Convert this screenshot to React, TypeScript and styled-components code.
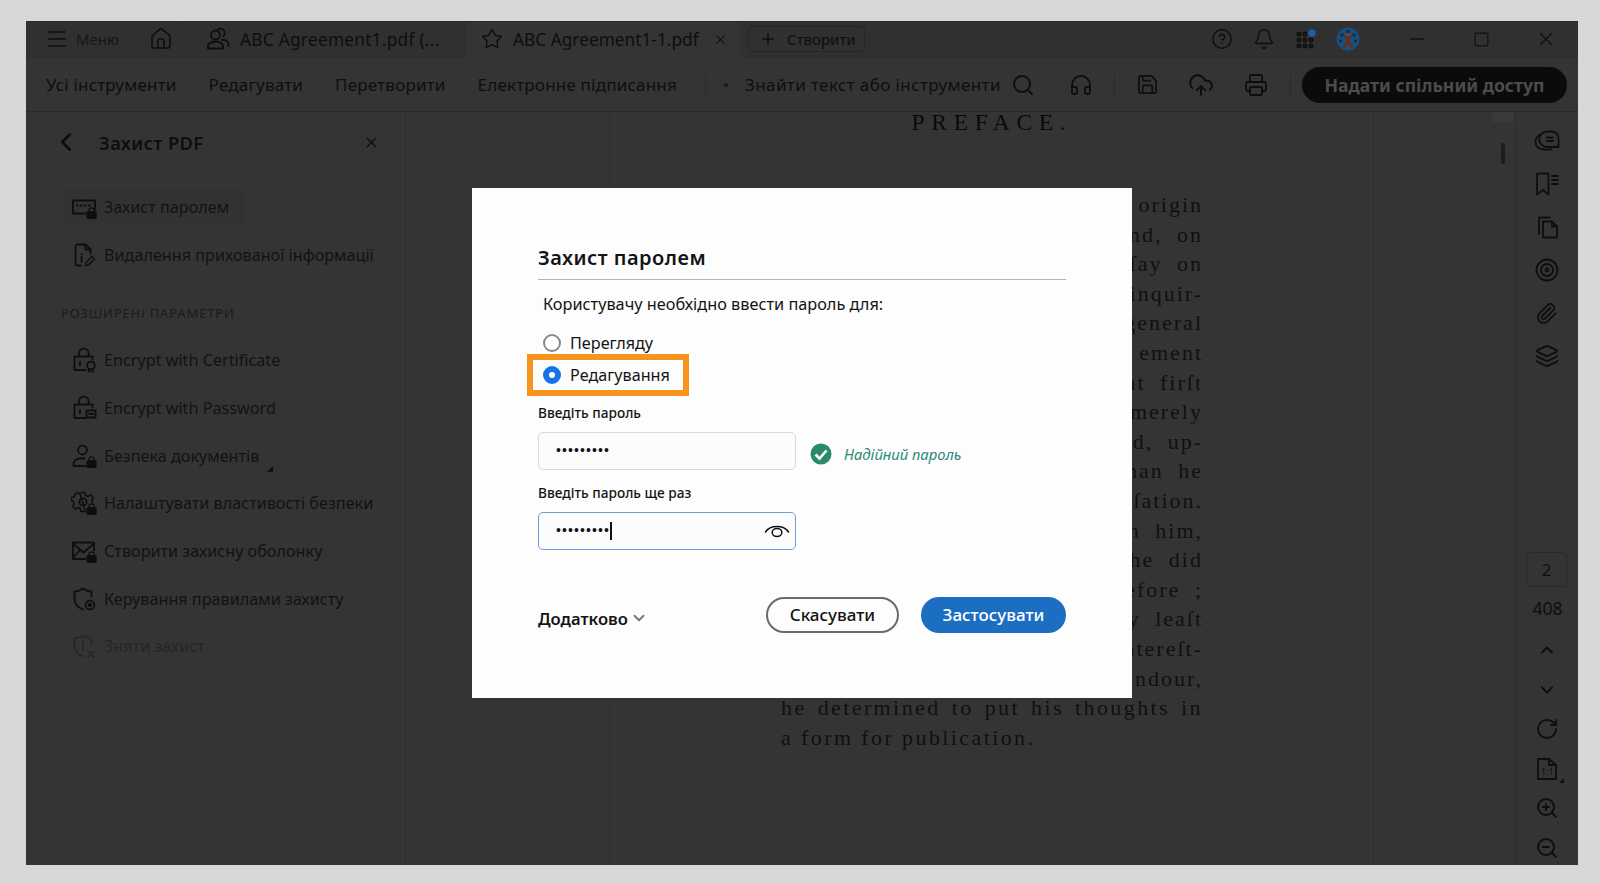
import React from 'react'
import styled, { createGlobalStyle } from 'styled-components'
import {
  Bell,
  ChevronDown,
  ChevronLeft,
  ChevronUp,
  CircleHelp,
  CloudUpload,
  Headphones,
  Home,
  Layers,
  Menu,
  Minus,
  Paperclip,
  Plus,
  Printer,
  RotateCw,
  Save,
  Search,
  Square,
  Star,
  X,
  ZoomIn,
  ZoomOut
} from 'lucide-react'

const INK = '#0e0e0e'

const GlobalStyle = createGlobalStyle`
  html, body {
    margin: 0;
    padding: 0;
    background: #d8d8d8;
  }
  body {
    font-family: "Noto Sans", "Open Sans", sans-serif;
    color: ${INK};
  }
`

const Screen = styled.div`
  width: 1600px;
  height: 884px;
  box-sizing: border-box;
  padding: 21px 22px 19px 26px;
  overflow: hidden;
`

const AppWindow = styled.div`
  position: relative;
  width: 1552px;
  height: 844px;
  display: flex;
  flex-direction: column;
  background: #343434;
  border-top: 1px solid #2a2a2a;
  box-sizing: border-box;
  overflow: hidden;
`

const TitleBar = styled.div`
  flex: 0 0 36px;
  display: flex;
  align-items: stretch;
  background: #303030;
`

const MenuCell = styled.div`
  width: 156px;
  box-sizing: border-box;
  padding: 0 0 2px 19px;
  display: flex;
  align-items: center;
  border-right: 1px solid #2b2b2b;
  font-size: 15px;
  color: #161616;
`

const MenuLabel = styled.span`
  margin: 0 30px 0 7px;
`

const Tab = styled.div<{ $active?: boolean }>`
  width: ${(p) => (p.$active ? 273 : 285)}px;
  box-sizing: border-box;
  padding: 0 0 2px ${(p) => (p.$active ? 14 : 23)}px;
  display: flex;
  align-items: center;
  gap: ${(p) => (p.$active ? 10 : 9)}px;
  background: ${(p) => (p.$active ? '#343434' : 'transparent')};
  font-size: 17.3px;
  letter-spacing: ${(p) => (p.$active ? 0 : 0.25)}px;
  white-space: nowrap;
`

const TabClose = styled.span`
  display: flex;
  margin-left: 4px;
  color: #181818;
`

const NewButton = styled.div`
  align-self: center;
  width: 117px;
  height: 26px;
  margin: 0 0 2px 8px;
  box-sizing: border-box;
  display: flex;
  align-items: center;
  gap: 10px;
  padding-left: 10px;
  border: 1px solid #262626;
  border-radius: 4px;
  font-size: 15px;
`

const TitleIcons = styled.div`
  margin-left: auto;
  padding-bottom: 2px;
  display: flex;
  align-items: center;
`

const IconCell = styled.span`
  width: 42px;
  display: flex;
  align-items: center;
  justify-content: center;
`

const WindowControls = styled.div`
  margin-left: 16px;
  padding-bottom: 2px;
  display: flex;
  align-items: center;
`

const WindowButton = styled.span`
  width: 64.5px;
  display: flex;
  align-items: center;
  justify-content: center;
  color: #101010;
`

const Toolbar = styled.div`
  flex: 0 0 54px;
  box-sizing: border-box;
  display: flex;
  align-items: center;
  padding: 0 11px 0 20px;
  border-bottom: 1px solid #2b2b2b;
`

const ToolNav = styled.nav`
  display: flex;
  gap: 32px;
  font-size: 17px;
  letter-spacing: 0.2px;
  white-space: nowrap;
`

const ToolDivider = styled.span<{ $left: number }>`
  width: 1px;
  height: 22px;
  background: #2c2c2c;
  margin-left: ${(p) => p.$left}px;
`

const FindBox = styled.div`
  display: flex;
  align-items: center;
  font-size: 17px;
  letter-spacing: 0.4px;
  white-space: nowrap;
`

const FindDot = styled.span`
  width: 4px;
  height: 4px;
  border-radius: 50%;
  background: #1a1a1a;
  margin: 0 17px 0 18px;
`

const ToolIcon = styled.span<{ $left: number }>`
  display: flex;
  margin-left: ${(p) => p.$left}px;
`

const ShareButton = styled.div`
  margin-left: auto;
  width: 265px;
  height: 36px;
  display: flex;
  align-items: center;
  justify-content: center;
  border-radius: 18px;
  background: #0b0b0b;
  color: #4c4c4c;
  font-size: 17.6px;
  font-weight: 700;
`

const Workspace = styled.div`
  flex: 1;
  min-height: 0;
  display: grid;
  grid-template-columns: 380px 204px 764px 142px 62px;
`

const Sidebar = styled.aside`
  box-sizing: border-box;
  padding: 10px 25px 0 36px;
  border-right: 1px solid #2e2e2e;
`

const SideHeader = styled.div`
  height: 40px;
  display: flex;
  align-items: center;
  margin-bottom: 27px;
  font-size: 18.3px;
  font-weight: 600;
  letter-spacing: 0.4px;
`

const SideTitle = styled.span`
  margin-left: 18px;
  flex: 1;
`

const ToolRow = styled.div<{ $selected?: boolean; $disabled?: boolean }>`
  width: ${(p) => (p.$selected ? '183px' : 'auto')};
  height: 36px;
  margin-bottom: 11.7px;
  box-sizing: border-box;
  padding-left: 9px;
  display: flex;
  align-items: center;
  gap: 7px;
  border-radius: 4px;
  background: ${(p) => (p.$selected ? '#323232' : 'transparent')};
  color: ${(p) => (p.$disabled ? '#262626' : '#121212')};
  font-size: 16.2px;
  white-space: nowrap;
`

const SectionLabel = styled.div`
  margin: 31px 0 20.5px -1px;
  font-size: 13px;
  letter-spacing: 0.85px;
  color: #1b1b1b;
`

const Caret = styled.span`
  width: 0;
  height: 0;
  align-self: flex-end;
  margin: 0 0 2px 1px;
  border-left: 6px solid transparent;
  border-bottom: 6px solid #101010;
`

const Gutter = styled.div`
  border-right: 1px solid #2e2e2e;
`

const Page = styled.main`
  box-sizing: border-box;
  padding: 0 170px 0 171px;
  border-right: 1px solid #2e2e2e;
  font-family: "Liberation Serif", "Times New Roman", serif;
  color: #101010;
`

const PageHeading = styled.h1`
  margin: 0 0 58px;
  font-size: 23.5px;
  line-height: 20px;
  font-weight: 400;
  letter-spacing: 6.7px;
  text-align: center;
  color: #0a0a0a;
`

const DocLine = styled.div<{ $align: 'right' | 'justify' | 'left' }>`
  height: 29.6px;
  line-height: 29.6px;
  font-size: 22px;
  letter-spacing: ${(p) => (p.$align === 'right' ? 2 : 2.4)}px;
  word-spacing: ${(p) => (p.$align === 'right' ? 7 : 0)}px;
  white-space: ${(p) => (p.$align === 'justify' ? 'normal' : 'nowrap')};
  text-align: ${(p) => p.$align};
  text-align-last: ${(p) => p.$align};
`

const ScrollGutter = styled.div`
  display: flex;
  justify-content: flex-end;
  padding-right: 1px;
  border-right: 1px solid #2c2c2c;
`

const ScrollTrack = styled.div`
  width: 22px;
  display: flex;
  flex-direction: column;
  align-items: center;
`

const ScrollCap = styled.div`
  width: 22px;
  height: 10px;
  background: #3a3a3a;
  margin-bottom: 21px;
`

const ScrollThumb = styled.div`
  width: 4px;
  height: 21px;
  border-radius: 2px;
  background: #1c1c1c;
`

const Rail = styled.aside`
  display: flex;
  flex-direction: column;
  align-items: center;
  justify-content: space-between;
  padding: 17px 1px 5px 0;
`

const RailGroup = styled.div<{ $gap: number }>`
  display: flex;
  flex-direction: column;
  align-items: center;
  gap: ${(p) => p.$gap}px;
`

const RailIcon = styled.span`
  position: relative;
  width: 24px;
  height: 24px;
  display: flex;
  align-items: center;
  justify-content: center;
`

const PageBox = styled.div`
  width: 41px;
  height: 35px;
  box-sizing: border-box;
  display: flex;
  align-items: center;
  justify-content: center;
  border: 1px solid #2a2a2a;
  border-radius: 4px;
  font-size: 17px;
`

const PageCount = styled.div`
  margin: 10px 0 19px 2px;
  font-size: 17.5px;
  line-height: 22px;
`

const RailCaret = styled(Caret)`
  position: absolute;
  right: -5px;
  bottom: -2px;
  margin: 0;
  border-left-width: 5px;
  border-bottom-width: 5px;
`

const Backdrop = styled.div`
  position: absolute;
  inset: 0;
  display: flex;
  align-items: center;
  justify-content: center;
`

const Dialog = styled.section`
  width: 660px;
  height: 510px;
  margin-bottom: 1px;
  box-sizing: border-box;
  padding: 53px 66px 0;
  background: #fdfdfd;
  color: #141414;
`

const DialogTitle = styled.h2`
  margin: 0;
  height: 38px;
  font-size: 20px;
  line-height: 34px;
  font-weight: 600;
  letter-spacing: 0.5px;
  border-bottom: 1px solid #b5b5b5;
`

const Prompt = styled.p`
  margin: 13px 0 0 5px;
  font-size: 16.3px;
  line-height: 22px;
`

const RadioRow = styled.div`
  position: relative;
  height: 32px;
  display: flex;
  align-items: center;
  gap: 9px;
  padding-left: 5px;
  font-size: 16.2px;
`

const Radio = styled.span<{ $checked?: boolean }>`
  width: 18px;
  height: 18px;
  box-sizing: border-box;
  border-radius: 50%;
  background: #fff;
  border: ${(p) => (p.$checked ? '6px solid #1473e6' : '2.4px solid #8a8a8a')};
`

const Callout = styled.span`
  position: absolute;
  left: -11px;
  top: -5px;
  width: 162px;
  height: 42px;
  box-sizing: border-box;
  border: 6px solid #f7941d;
`

const RadioGroup = styled.div`
  margin-top: 12px;
`

const FieldLabel = styled.div<{ $top: number }>`
  margin-top: ${(p) => p.$top}px;
  font-size: 13.7px;
  line-height: 18px;
  font-weight: 500;
`

const FieldRow = styled.div`
  margin-top: 10px;
  display: flex;
  align-items: center;
`

const PasswordBox = styled.div<{ $focused?: boolean }>`
  width: 258px;
  height: 38px;
  box-sizing: border-box;
  padding: 0 5px 0 17px;
  display: flex;
  align-items: center;
  border-radius: 5px;
  background: #fcfcfc;
  border: ${(p) => (p.$focused ? '1.5px solid #6b9fd6' : '1.5px solid #d9d9d9')};
`

const Dots = styled.span`
  font-family: "Liberation Sans", sans-serif;
  font-size: 14px;
  line-height: 1;
  letter-spacing: 1.1px;
  margin-top: -2px;
`

const TextCursor = styled.span`
  width: 2px;
  height: 18px;
  background: #111;
`

const EyeIcon = styled.span`
  display: flex;
  margin-left: auto;
`

const Strength = styled.div`
  margin: 5px 0 0 14px;
  display: flex;
  align-items: center;
  gap: 12px;
  font-size: 14.8px;
  font-style: italic;
  color: #2a8a78;
`

const DialogFooter = styled.div`
  margin-top: 47px;
  display: flex;
  align-items: center;
`

const MoreToggle = styled.div`
  display: flex;
  align-items: center;
  gap: 2px;
  margin-top: 6px;
  font-size: 16.6px;
  font-weight: 600;
`

const FooterButtons = styled.div`
  margin-left: auto;
  display: flex;
  gap: 22px;
`

const PillButton = styled.button<{ $primary?: boolean }>`
  width: ${(p) => (p.$primary ? 145 : 133)}px;
  height: 36px;
  padding: 0 0 2px;
  border-radius: 18px;
  font-family: inherit;
  font-size: 17px;
  font-weight: 500;
  color: ${(p) => (p.$primary ? '#fff' : '#141414')};
  background: ${(p) => (p.$primary ? '#1b6ec2' : '#fdfdfd')};
  border: ${(p) => (p.$primary ? 'none' : '2px solid #6a6a6a')};
`

const Glyph: React.FC<{ size?: number; children: React.ReactNode }> = ({ size = 26, children }) => (
  <svg
    width={size}
    height={size}
    viewBox="0 0 26 26"
    fill="none"
    stroke={INK}
    strokeWidth={1.8}
    strokeLinecap="round"
    strokeLinejoin="round"
    style={{ flex: 'none' }}
  >
    {children}
  </svg>
)

const LockBadge = () => (
  <>
    <path d="M18 18v-1.6a2.6 2.6 0 0 1 5.2 0V18" strokeWidth={1.3} />
    <rect x="16.4" y="18" width="8.4" height="6.2" rx="1" fill={INK} />
  </>
)

const PasswordGlyph = () => (
  <Glyph>
    <path d="M15 19.5H2V6.5h22v9" />
    <path d="M6 11.5h.6M10 11.5h.6M14 11.5h.6M18 11.5h.6" strokeWidth={2} />
    <LockBadge />
  </Glyph>
)

const RedactGlyph = () => (
  <Glyph>
    <path d="M10 23.5H6.5a2 2 0 0 1-2-2v-17a2 2 0 0 1 2-2h8l5 5v4" />
    <path d="M14.5 2.5v5h5" />
    <path d="M10.5 12v.4M10.5 15v5" strokeWidth={1.8} />
    <path d="M15 20.5l6-6 2.5 2.5-6 6-3 .5z" strokeWidth={1.4} />
  </Glyph>
)

const PadlockBase = () => (
  <>
    <path d="M8 9V6.5a4.8 4.8 0 0 1 9.6 0V9" />
    <path d="M15 23H3.5V9.5h18v3" />
    <path d="M9 15v3" strokeWidth={2} />
  </>
)

const CertificateGlyph = () => (
  <Glyph>
    <PadlockBase />
    <circle cx="20" cy="18.5" r="3.8" />
    <path d="M17.6 22v3l2.4-1.3 2.4 1.3v-3" strokeWidth={1.2} />
  </Glyph>
)

const EncryptGlyph = () => (
  <Glyph>
    <PadlockBase />
    <rect x="15.5" y="15.5" width="9" height="7" />
    <path d="M18 19h4" />
  </Glyph>
)

const UserLockGlyph = () => (
  <Glyph>
    <circle cx="11.5" cy="7" r="4.5" />
    <path d="M2.5 23v-1.5c0-3.8 3.5-6 7-6h4M2.500 23H15" />
    <LockBadge />
  </Glyph>
)

const GearLockGlyph = () => (
  <Glyph>
    <path d="M10 2.500h4l.7 3 2.400 1 2.600-1.600 2.600 2.800-1.600 2.600.8 2M14.500 21.500H10l-.7-3-2.400-1-2.600 1.600-2.600-2.800 1.600-2.600-1-2.400-2-.7v-3l3-.7 1-2.400L3.600 5l2.800-2.600 2.600 1.600z" strokeWidth={1.5} />
    <circle cx="12" cy="12" r="3.600" />
    <LockBadge />
  </Glyph>
)

const MailLockGlyph = () => (
  <Glyph>
    <path d="M14.500 21H2V4.500h21v8" />
    <path d="M2 5.500l10.500 9 10.500-9M2 20l7-8" />
    <LockBadge />
  </Glyph>
)

const ShieldGearGlyph = () => (
  <Glyph>
    <path d="M12 2.500c2.500 2 5.500 3 8.500 3v5M12 2.500c-2.500 2-5.500 3-8.500 3v7c0 5 3.500 9 8.500 11" />
    <circle cx="19" cy="19" r="4.400" />
    <circle cx="19" cy="19" r="1.200" fill={INK} />
  </Glyph>
)

const ShieldOffGlyph = () => (
  <svg width="26" height="26" viewBox="0 0 26 26" fill="none" stroke="#262626" strokeWidth={1.6} strokeLinecap="round">
    <path d="M12 2.500c2.500 2 5.500 3 8.500 3v7M12 2.500c-2.500 2-5.500 3-8.500 3v7c0 5 3.500 9 8.500 11" />
    <path d="M12 7v10" strokeWidth={1.4} />
    <path d="M17 18l6 6M23 18l-6 6" />
  </svg>
)

const PeopleGlyph = () => (
  <Glyph>
    <circle cx="10.500" cy="9" r="4.500" />
    <path d="M13 3.200a4.600 4.600 0 0 1 5 .4 4.500 4.500 0 0 1 .5 6.600" />
    <path d="M3 22.500c-1-4.500 3-7 7.500-7s8.500 2.500 7.500 7z" />
    <path d="M17 14c3.500-.5 7 1.500 6.500 6" />
  </Glyph>
)

const AppsGlyph = () => (
  <svg width="22" height="22" viewBox="0 0 22 22" fill="none" stroke={INK} strokeWidth={1.7}>
    <circle cx="4" cy="6" r="1.600" />
    <circle cx="10" cy="6" r="1.600" />
    <circle cx="4" cy="12" r="1.600" />
    <circle cx="10" cy="12" r="1.600" />
    <circle cx="16" cy="12" r="1.600" />
    <circle cx="4" cy="18" r="1.600" />
    <circle cx="10" cy="18" r="1.600" />
    <circle cx="16" cy="18" r="1.600" />
    <circle cx="17" cy="5" r="3.800" fill="#1c5fa3" stroke="none" />
  </svg>
)

const AvatarGlyph = () => (
  <svg width="24" height="24" viewBox="0 0 24 24">
    <circle cx="12" cy="12" r="11.500" fill="#184f7c" />
    <circle cx="6" cy="8" r="1.800" fill="#0d2f4d" />
    <circle cx="12" cy="4.500" r="1.800" fill="#0d2f4d" />
    <circle cx="18" cy="8" r="1.800" fill="#0d2f4d" />
    <circle cx="4.500" cy="14" r="1.500" fill="#0d2f4d" />
    <circle cx="19.500" cy="14" r="1.500" fill="#0d2f4d" />
    <path d="M8 21L15 8M16 21L9 8" stroke="#6e2a18" strokeWidth={2.600} />
    <path d="M9.500 8.500a3 3 0 0 1 5 0" stroke="#7a4a10" strokeWidth={2} fill="none" />
  </svg>
)

const CommentsGlyph = () => (
  <Glyph>
    <path d="M13 3.500h5a6.500 6.500 0 0 1 6.500 6.500v9H13a7.700 7.700 0 0 1 0-15.500z" />
    <path d="M6 6.500C3.500 8 1.500 10.500 1.500 14c0 4.500 3.500 7.500 8 7.500h8" />
    <path d="M13 9.500h6M13 13h6" />
  </Glyph>
)

const BookmarksGlyph = () => (
  <Glyph>
    <path d="M3 2.500h11.500v21l-5.700-4.500-5.800 4.500z" />
    <path d="M18 5h6M18 9h6M18 13h6" />
  </Glyph>
)

const PagesGlyph = () => (
  <Glyph>
    <path d="M5 20V3.500h11" />
    <path d="M9 7.500h9l5 5V23.500H9z" />
    <path d="M18 7.500v5h5" />
  </Glyph>
)

const TargetGlyph = () => (
  <Glyph>
    <circle cx="13" cy="13" r="10.500" />
    <circle cx="13" cy="13" r="6" />
    <circle cx="13" cy="13" r="1.500" />
  </Glyph>
)

const FitGlyph = () => (
  <svg width="22" height="24" viewBox="0 0 22 24" fill="none" stroke={INK} strokeWidth={1.8}>
    <path d="M2 2h11l7 6v14H2z" />
    <path d="M13 2v6h7" />
    <text x="5" y="18" fontSize="9" fontFamily="Noto Sans" fill={INK} stroke="none">1:1</text>
  </svg>
)

const CheckBadge = () => (
  <svg width="22" height="22" viewBox="0 0 22 22">
    <circle cx="11" cy="11" r="10.500" fill="#2b8a6b" />
    <path d="M5.500 11.500l4 4 7-8" fill="none" stroke="#fff" strokeWidth={2.600} />
  </svg>
)

const RevealGlyph = () => (
  <svg width="26" height="18" viewBox="0 0 26 18" fill="none" stroke="#111" strokeWidth={1.5} strokeLinecap="round">
    <path d="M1.500 10C6 2.500 20 2.500 24.500 10" />
    <ellipse cx="13" cy="10.500" rx="4.800" ry="4" />
  </svg>
)

const sideTools = [
  { icon: <CertificateGlyph />, label: 'Encrypt with Certificate' },
  { icon: <EncryptGlyph />, label: 'Encrypt with Password' },
  { icon: <UserLockGlyph />, label: 'Безпека документів', caret: true },
  { icon: <GearLockGlyph />, label: 'Налаштувати властивості безпеки' },
  { icon: <MailLockGlyph />, label: 'Створити захисну оболонку' },
  { icon: <ShieldGearGlyph />, label: 'Керування правилами захисту' },
  { icon: <ShieldOffGlyph />, label: 'Зняти захист', disabled: true }
]

const docTails = [
  'the origin',
  'and, on',
  'eſſay on',
  'inquir-',
  'general',
  'ement',
  'at firſt',
  'merely',
  'ed, up-',
  'than he',
  'converſation.',
  'on him,',
  'he did',
  'before ;',
  'by leaſt',
  'intereſt-',
  'candour,'
]

const App: React.FC = () => {
  return (
    <Screen>
      <GlobalStyle />
      <AppWindow>
        <TitleBar>
          <MenuCell>
            <Menu size={24} color={INK} strokeWidth={1.7} />
            <MenuLabel>Меню</MenuLabel>
            <Home size={24} color={INK} strokeWidth={1.6} />
          </MenuCell>
          <Tab>
            <PeopleGlyph />
            ABC Agreement1.pdf (...
          </Tab>
          <Tab $active>
            <Star size={22} color={INK} strokeWidth={1.5} />
            ABC Agreement1-1.pdf
            <TabClose>
              <X size={15} strokeWidth={1.8} />
            </TabClose>
          </Tab>
          <NewButton>
            <Plus size={18} color={INK} strokeWidth={2} />
            Створити
          </NewButton>
          <TitleIcons>
            <IconCell>
              <CircleHelp size={22} color={INK} strokeWidth={1.6} />
            </IconCell>
            <IconCell>
              <Bell size={22} color={INK} strokeWidth={1.7} />
            </IconCell>
            <IconCell>
              <AppsGlyph />
            </IconCell>
            <IconCell>
              <AvatarGlyph />
            </IconCell>
          </TitleIcons>
          <WindowControls>
            <WindowButton>
              <Minus size={22} strokeWidth={1.5} />
            </WindowButton>
            <WindowButton>
              <Square size={17} strokeWidth={1.6} />
            </WindowButton>
            <WindowButton>
              <X size={22} strokeWidth={1.5} />
            </WindowButton>
          </WindowControls>
        </TitleBar>

        <Toolbar>
          <ToolNav>
            <span>Усі інструменти</span>
            <span>Редагувати</span>
            <span>Перетворити</span>
            <span>Електронне підписання</span>
          </ToolNav>
          <ToolDivider $left={28} />
          <FindBox>
            <FindDot />
            Знайти текст або інструменти
          </FindBox>
          <ToolIcon $left={10}>
            <Search size={24} color={INK} strokeWidth={1.9} />
          </ToolIcon>
          <ToolIcon $left={34}>
            <Headphones size={24} color={INK} strokeWidth={1.9} />
          </ToolIcon>
          <ToolDivider $left={21} />
          <ToolIcon $left={21}>
            <Save size={23} color={INK} strokeWidth={1.8} />
          </ToolIcon>
          <ToolIcon $left={29}>
            <CloudUpload size={26} color={INK} strokeWidth={1.8} />
          </ToolIcon>
          <ToolIcon $left={30}>
            <Printer size={24} color={INK} strokeWidth={1.8} />
          </ToolIcon>
          <ToolDivider $left={22} />
          <ShareButton>Надати спільний доступ</ShareButton>
        </Toolbar>

        <Workspace>
          <Sidebar>
            <SideHeader>
              <ChevronLeft size={30} color={INK} strokeWidth={2.2} style={{ marginLeft: -11 }} />
              <SideTitle>Захист PDF</SideTitle>
              <X size={17} color={INK} strokeWidth={2} />
            </SideHeader>
            <ToolRow $selected>
              <PasswordGlyph />
              Захист паролем
            </ToolRow>
            <ToolRow>
              <RedactGlyph />
              Видалення прихованої інформації
            </ToolRow>
            <SectionLabel>РОЗШИРЕНІ ПАРАМЕТРИ</SectionLabel>
            {sideTools.map((tool) => (
              <ToolRow key={tool.label} $disabled={tool.disabled}>
                {tool.icon}
                {tool.label}
                {tool.caret && <Caret />}
              </ToolRow>
            ))}
          </Sidebar>

          <Gutter />

          <Page>
            <PageHeading>PREFACE.</PageHeading>
            {docTails.map((line) => (
              <DocLine key={line} $align="right">
                {line}
              </DocLine>
            ))}
            <DocLine $align="justify">he determined to put his thoughts in</DocLine>
            <DocLine $align="left">a form for publication.</DocLine>
          </Page>

          <ScrollGutter>
            <ScrollTrack>
              <ScrollCap />
              <ScrollThumb />
            </ScrollTrack>
          </ScrollGutter>

          <Rail>
            <RailGroup $gap={19}>
              <RailIcon>
                <CommentsGlyph />
              </RailIcon>
              <RailIcon>
                <BookmarksGlyph />
              </RailIcon>
              <RailIcon>
                <PagesGlyph />
              </RailIcon>
              <RailIcon>
                <TargetGlyph />
              </RailIcon>
              <RailIcon>
                <Paperclip size={23} color={INK} strokeWidth={1.9} />
              </RailIcon>
              <RailIcon>
                <Layers size={24} color={INK} strokeWidth={1.9} />
              </RailIcon>
            </RailGroup>
            <RailGroup $gap={0}>
              <PageBox>2</PageBox>
              <PageCount>408</PageCount>
              <RailGroup $gap={15.6}>
                <RailIcon>
                  <ChevronUp size={20} color={INK} strokeWidth={2.4} />
                </RailIcon>
                <RailIcon>
                  <ChevronDown size={20} color={INK} strokeWidth={2.4} />
                </RailIcon>
                <RailIcon>
                  <RotateCw size={24} color={INK} strokeWidth={1.8} />
                </RailIcon>
                <RailIcon>
                  <FitGlyph />
                  <RailCaret />
                </RailIcon>
                <RailIcon>
                  <ZoomIn size={24} color={INK} strokeWidth={1.9} />
                </RailIcon>
                <RailIcon>
                  <ZoomOut size={24} color={INK} strokeWidth={1.9} />
                </RailIcon>
              </RailGroup>
            </RailGroup>
          </Rail>
        </Workspace>

        <Backdrop>
          <Dialog>
            <DialogTitle>Захист паролем</DialogTitle>
            <Prompt>Користувачу необхідно ввести пароль для:</Prompt>
            <RadioGroup>
              <RadioRow>
                <Radio />
                Перегляду
              </RadioRow>
              <RadioRow>
                <Radio $checked />
                Редагування
                <Callout />
              </RadioRow>
            </RadioGroup>
            <FieldLabel $top={13}>Введіть пароль</FieldLabel>
            <FieldRow>
              <PasswordBox>
                <Dots>•••••••••</Dots>
              </PasswordBox>
              <Strength>
                <CheckBadge />
                Надійний пароль
              </Strength>
            </FieldRow>
            <FieldLabel $top={14}>Введіть пароль ще раз</FieldLabel>
            <FieldRow>
              <PasswordBox $focused>
                <Dots>•••••••••</Dots>
                <TextCursor />
                <EyeIcon>
                  <RevealGlyph />
                </EyeIcon>
              </PasswordBox>
            </FieldRow>
            <DialogFooter>
              <MoreToggle>
                Додатково
                <ChevronDown size={18} color="#777" strokeWidth={2.6} />
              </MoreToggle>
              <FooterButtons>
                <PillButton>Скасувати</PillButton>
                <PillButton $primary>Застосувати</PillButton>
              </FooterButtons>
            </DialogFooter>
          </Dialog>
        </Backdrop>
      </AppWindow>
    </Screen>
  )
}

export default App
